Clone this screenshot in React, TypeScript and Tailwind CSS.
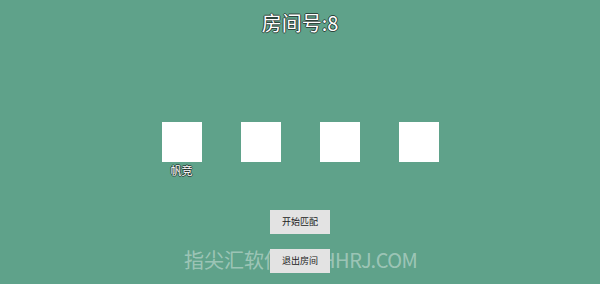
import React from "react";

const SLOTS = ["帆竞", "", "", ""];

const outline =
  "[text-shadow:1px_0_0_rgba(30,40,36,0.75),-1px_0_0_rgba(30,40,36,0.75),0_1px_0_rgba(30,40,36,0.75),0_-1px_0_rgba(30,40,36,0.75)]";

export default function App() {
  return (
    <div className="relative flex h-[284px] w-[600px] flex-col items-center overflow-hidden bg-[#5fa28a] font-['Noto_Sans_CJK_SC','Noto_Sans',sans-serif]">
      {/* Room title */}
      <h1
        className={`mt-[10px] text-[20px] leading-[26px] text-white ${outline}`}
      >
        房间号:8
      </h1>

      {/* Player slots */}
      <div className="mt-[86px] flex gap-[39px]">
        {SLOTS.map((name, i) => (
          <div key={i} className="flex w-[40px] flex-col items-center">
            <div className="h-[40px] w-[40px] bg-white" />
            <span
              className={`mt-[1px] h-[15px] whitespace-nowrap text-[11px] leading-[15px] text-white ${outline}`}
            >
              {name}
            </span>
          </div>
        ))}
      </div>

      {/* Actions */}
      <button className="relative z-10 mt-[32px] h-[24px] w-[60px] bg-[#e3e3e3] text-[9px] text-[#222]">
        开始匹配
      </button>
      <button className="relative z-10 mt-[15px] h-[24px] w-[60px] bg-[#e3e3e3] text-[9px] text-[#222]">
        退出房间
      </button>

      {/* Watermark */}
      <div className="absolute left-[184px] top-[247px] z-0 flex items-baseline gap-[16px] whitespace-nowrap text-[20px] leading-[26px] text-white/40">
        <span>指尖汇软件</span>
        <span className="tracking-[-0.5px]">ZJHHRJ.COM</span>
      </div>
    </div>
  );
}
